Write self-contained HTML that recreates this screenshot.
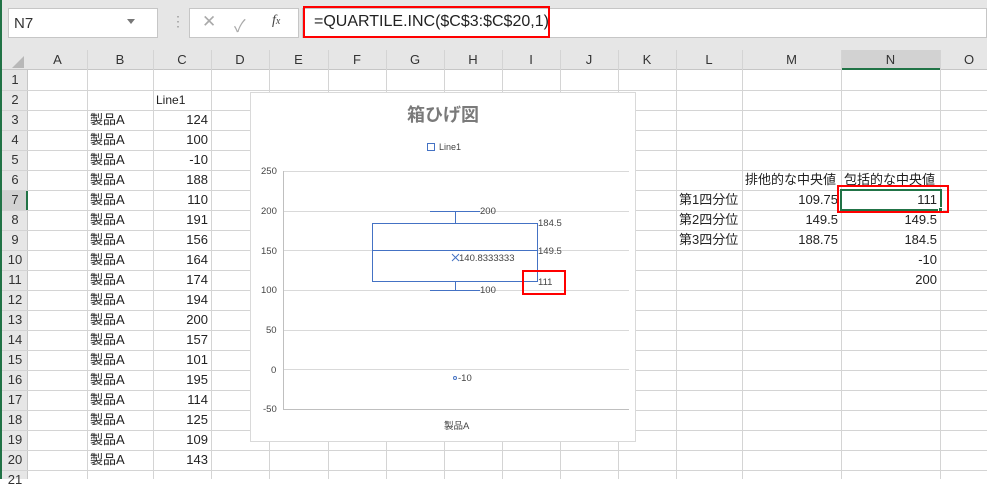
<!DOCTYPE html>
<html><head><meta charset="utf-8"><style>
*{margin:0;padding:0;box-sizing:border-box}
body{width:987px;height:479px;overflow:hidden;background:#fff;font-family:"Liberation Sans","Noto Sans CJK JP",sans-serif;position:relative;font-size:13px;color:#222}
.a{position:absolute}
.vl{position:absolute;width:1px;background:#d4d4d4}
.hl{position:absolute;height:1px;background:#d4d4d4}
.ch{position:absolute;top:50px;height:20px;line-height:20px;text-align:center;color:#333;font-size:13px}
.rh{position:absolute;left:2px;width:26px;height:20px;line-height:20px;text-align:center;color:#333;font-size:13px}
.c{position:absolute;height:20px;line-height:20px;font-size:13px;white-space:nowrap}
.r{text-align:right}
.t{position:absolute;font-size:9.5px;color:#444;white-space:nowrap}
</style></head><body>
<div class="a" style="left:0;top:0;width:987px;height:50px;background:#e6e6e6"></div>
<div class="a" style="left:0;top:0;width:2px;height:479px;background:#217346"></div>
<div class="a" style="left:8px;top:8px;width:150px;height:30px;background:#fff;border:1px solid #c6c6c6"></div>
<div class="a" style="left:14px;top:15px;font-size:15px;color:#333">N7</div>
<div class="a" style="left:127px;top:19px;width:0;height:0;border-left:4px solid transparent;border-right:4px solid transparent;border-top:5px solid #777"></div>
<div class="a" style="left:171px;top:13px;color:#999;font-size:14px">⋮</div>
<div class="a" style="left:189px;top:8px;width:110px;height:30px;background:#fff;border:1px solid #c6c6c6"></div>
<div class="a" style="left:202px;top:12px;color:#aaa;font-size:17px">✕</div>
<div class="a" style="left:234px;top:12px;color:#aaa;font-size:17px">✓</div>
<div class="a" style="left:272px;top:13px;color:#444;font-size:14px;font-style:italic;font-family:'Liberation Serif',serif">f<span style="font-size:10px">x</span></div>
<div class="a" style="left:302px;top:8px;width:685px;height:30px;background:#fff;border:1px solid #c6c6c6"></div>
<div class="a" style="left:303px;top:6px;width:247px;height:32px;border:2px solid #f00"></div>
<div class="a" style="left:314px;top:13px;font-size:16px;color:#222">=QUARTILE.INC($C$3:$C$20,1)</div>
<div class="a" style="left:2px;top:50px;width:985px;height:20px;background:#e6e6e6;border-bottom:1px solid #c6c6c6"></div>
<div class="a" style="left:2px;top:70px;width:26px;height:409px;background:#e6e6e6;border-right:1px solid #c6c6c6"></div>
<div class="a" style="left:12px;top:56px;width:0;height:0;border-left:12px solid transparent;border-bottom:12px solid #b8b8b8"></div>
<div class="a" style="left:841px;top:50px;width:99px;height:20px;background:#d2d2d2;border-bottom:2px solid #217346"></div>
<div class="a" style="left:2px;top:190px;width:26px;height:20px;background:#d2d2d2;border-right:2px solid #217346"></div>
<div class="ch" style="left:28px;width:59px">A</div><div class="ch" style="left:87px;width:66px">B</div><div class="ch" style="left:153px;width:58px">C</div><div class="ch" style="left:211px;width:58px">D</div><div class="ch" style="left:269px;width:59px">E</div><div class="ch" style="left:328px;width:58px">F</div><div class="ch" style="left:386px;width:58px">G</div><div class="ch" style="left:444px;width:58px">H</div><div class="ch" style="left:502px;width:58px">I</div><div class="ch" style="left:560px;width:58px">J</div><div class="ch" style="left:618px;width:58px">K</div><div class="ch" style="left:676px;width:66px">L</div><div class="ch" style="left:742px;width:99px">M</div><div class="ch" style="left:841px;width:99px">N</div><div class="ch" style="left:940px;width:58px">O</div>
<div class="vl" style="left:87px;top:50px;height:429px"></div><div class="vl" style="left:153px;top:50px;height:429px"></div><div class="vl" style="left:211px;top:50px;height:429px"></div><div class="vl" style="left:269px;top:50px;height:429px"></div><div class="vl" style="left:328px;top:50px;height:429px"></div><div class="vl" style="left:386px;top:50px;height:429px"></div><div class="vl" style="left:444px;top:50px;height:429px"></div><div class="vl" style="left:502px;top:50px;height:429px"></div><div class="vl" style="left:560px;top:50px;height:429px"></div><div class="vl" style="left:618px;top:50px;height:429px"></div><div class="vl" style="left:676px;top:50px;height:429px"></div><div class="vl" style="left:742px;top:50px;height:429px"></div><div class="vl" style="left:841px;top:50px;height:429px"></div><div class="vl" style="left:940px;top:50px;height:429px"></div>
<div class="hl" style="left:2px;top:90px;width:985px"></div><div class="hl" style="left:2px;top:110px;width:985px"></div><div class="hl" style="left:2px;top:130px;width:985px"></div><div class="hl" style="left:2px;top:150px;width:985px"></div><div class="hl" style="left:2px;top:170px;width:985px"></div><div class="hl" style="left:2px;top:190px;width:985px"></div><div class="hl" style="left:2px;top:210px;width:985px"></div><div class="hl" style="left:2px;top:230px;width:985px"></div><div class="hl" style="left:2px;top:250px;width:985px"></div><div class="hl" style="left:2px;top:270px;width:985px"></div><div class="hl" style="left:2px;top:290px;width:985px"></div><div class="hl" style="left:2px;top:310px;width:985px"></div><div class="hl" style="left:2px;top:330px;width:985px"></div><div class="hl" style="left:2px;top:350px;width:985px"></div><div class="hl" style="left:2px;top:370px;width:985px"></div><div class="hl" style="left:2px;top:390px;width:985px"></div><div class="hl" style="left:2px;top:410px;width:985px"></div><div class="hl" style="left:2px;top:430px;width:985px"></div><div class="hl" style="left:2px;top:450px;width:985px"></div><div class="hl" style="left:2px;top:470px;width:985px"></div>
<div class="rh" style="top:70px">1</div><div class="rh" style="top:90px">2</div><div class="rh" style="top:110px">3</div><div class="rh" style="top:130px">4</div><div class="rh" style="top:150px">5</div><div class="rh" style="top:170px">6</div><div class="rh" style="top:190px">7</div><div class="rh" style="top:210px">8</div><div class="rh" style="top:230px">9</div><div class="rh" style="top:250px">10</div><div class="rh" style="top:270px">11</div><div class="rh" style="top:290px">12</div><div class="rh" style="top:310px">13</div><div class="rh" style="top:330px">14</div><div class="rh" style="top:350px">15</div><div class="rh" style="top:370px">16</div><div class="rh" style="top:390px">17</div><div class="rh" style="top:410px">18</div><div class="rh" style="top:430px">19</div><div class="rh" style="top:450px">20</div><div class="rh" style="top:470px">21</div>
<div class="c" style="left:156px;top:90px;font-size:12px">Line1</div>
<div class="c" style="left:90px;top:110px">製品A</div><div class="c r" style="left:153px;width:55px;top:110px">124</div>
<div class="c" style="left:90px;top:130px">製品A</div><div class="c r" style="left:153px;width:55px;top:130px">100</div>
<div class="c" style="left:90px;top:150px">製品A</div><div class="c r" style="left:153px;width:55px;top:150px">-10</div>
<div class="c" style="left:90px;top:170px">製品A</div><div class="c r" style="left:153px;width:55px;top:170px">188</div>
<div class="c" style="left:90px;top:190px">製品A</div><div class="c r" style="left:153px;width:55px;top:190px">110</div>
<div class="c" style="left:90px;top:210px">製品A</div><div class="c r" style="left:153px;width:55px;top:210px">191</div>
<div class="c" style="left:90px;top:230px">製品A</div><div class="c r" style="left:153px;width:55px;top:230px">156</div>
<div class="c" style="left:90px;top:250px">製品A</div><div class="c r" style="left:153px;width:55px;top:250px">164</div>
<div class="c" style="left:90px;top:270px">製品A</div><div class="c r" style="left:153px;width:55px;top:270px">174</div>
<div class="c" style="left:90px;top:290px">製品A</div><div class="c r" style="left:153px;width:55px;top:290px">194</div>
<div class="c" style="left:90px;top:310px">製品A</div><div class="c r" style="left:153px;width:55px;top:310px">200</div>
<div class="c" style="left:90px;top:330px">製品A</div><div class="c r" style="left:153px;width:55px;top:330px">157</div>
<div class="c" style="left:90px;top:350px">製品A</div><div class="c r" style="left:153px;width:55px;top:350px">101</div>
<div class="c" style="left:90px;top:370px">製品A</div><div class="c r" style="left:153px;width:55px;top:370px">195</div>
<div class="c" style="left:90px;top:390px">製品A</div><div class="c r" style="left:153px;width:55px;top:390px">114</div>
<div class="c" style="left:90px;top:410px">製品A</div><div class="c r" style="left:153px;width:55px;top:410px">125</div>
<div class="c" style="left:90px;top:430px">製品A</div><div class="c r" style="left:153px;width:55px;top:430px">109</div>
<div class="c" style="left:90px;top:450px">製品A</div><div class="c r" style="left:153px;width:55px;top:450px">143</div>
<div class="c" style="left:745px;top:170px">排他的な中央値</div>
<div class="c" style="left:844px;top:170px">包括的な中央値</div>
<div class="c" style="left:679px;top:190px">第1四分位</div><div class="c r" style="left:742px;width:96px;top:190px">109.75</div><div class="c r" style="left:841px;width:96px;top:190px">111</div>
<div class="c" style="left:679px;top:210px">第2四分位</div><div class="c r" style="left:742px;width:96px;top:210px">149.5</div><div class="c r" style="left:841px;width:96px;top:210px">149.5</div>
<div class="c" style="left:679px;top:230px">第3四分位</div><div class="c r" style="left:742px;width:96px;top:230px">188.75</div><div class="c r" style="left:841px;width:96px;top:230px">184.5</div>
<div class="c r" style="left:841px;width:96px;top:250px">-10</div>
<div class="c r" style="left:841px;width:96px;top:270px">200</div>
<div class="a" style="left:840px;top:189px;width:102px;height:22px;border:2px solid #217346"></div>
<div class="a" style="left:938px;top:207px;width:5px;height:5px;background:#217346;border:1px solid #fff"></div>
<div class="a" style="left:837px;top:185px;width:112px;height:28px;border:2px solid #f00"></div>
<div class="a" style="left:250px;top:92px;width:386px;height:350px;background:#fff;border:1px solid #d9d9d9"></div>
<div class="a" style="left:250px;top:101px;width:386px;text-align:center;font-size:18px;font-weight:bold;color:#7a7a7a">箱ひげ図</div>
<div class="a" style="left:427px;top:143px;width:8px;height:8px;border:1px solid #4472c4"></div>
<div class="t" style="left:439px;top:142px;font-size:9px">Line1</div>
<svg class="a" style="left:250px;top:92px" width="386" height="350">
<g stroke="#d9d9d9" stroke-width="1">
<line x1="34" y1="79.5" x2="379" y2="79.5"/><line x1="34" y1="119.5" x2="379" y2="119.5"/><line x1="34" y1="158.5" x2="379" y2="158.5"/><line x1="34" y1="198.5" x2="379" y2="198.5"/><line x1="34" y1="238.5" x2="379" y2="238.5"/><line x1="34" y1="277.5" x2="379" y2="277.5"/>
</g>
<g stroke="#bfbfbf"><line x1="33.5" y1="79" x2="33.5" y2="317"/><line x1="33" y1="317.5" x2="379" y2="317.5"/></g>
<g stroke="#4472c4" stroke-width="1" fill="none">
<rect x="122.5" y="131.5" width="165" height="58"/>
<line x1="122" y1="158.5" x2="288" y2="158.5"/>
<line x1="205.5" y1="119" x2="205.5" y2="131"/><line x1="180" y1="119.5" x2="230" y2="119.5"/>
<line x1="205.5" y1="190" x2="205.5" y2="198"/><line x1="180" y1="198.5" x2="230" y2="198.5"/>
<path d="M202 162l7 7M209 162l-7 7"/>
<circle cx="205" cy="286" r="1.5"/>
</g>
</svg>
<div class="t" style="left:261px;top:166px">250</div><div class="t" style="left:261px;top:206px">200</div><div class="t" style="left:261px;top:246px">150</div><div class="t" style="left:261px;top:285px">100</div><div class="t" style="left:266px;top:325px">50</div><div class="t" style="left:271px;top:365px">0</div><div class="t" style="left:263px;top:404px">-50</div>
<div class="t" style="left:480px;top:206px">200</div>
<div class="t" style="left:538px;top:218px">184.5</div>
<div class="t" style="left:538px;top:246px">149.5</div>
<div class="t" style="left:459px;top:253px">140.8333333</div>
<div class="t" style="left:538px;top:277px">111</div>
<div class="t" style="left:480px;top:285px">100</div>
<div class="t" style="left:458px;top:373px">-10</div>
<div class="t" style="left:444px;top:418px">製品A</div>
<div class="a" style="left:522px;top:270px;width:44px;height:25px;border:2px solid #f00"></div>
</body></html>
